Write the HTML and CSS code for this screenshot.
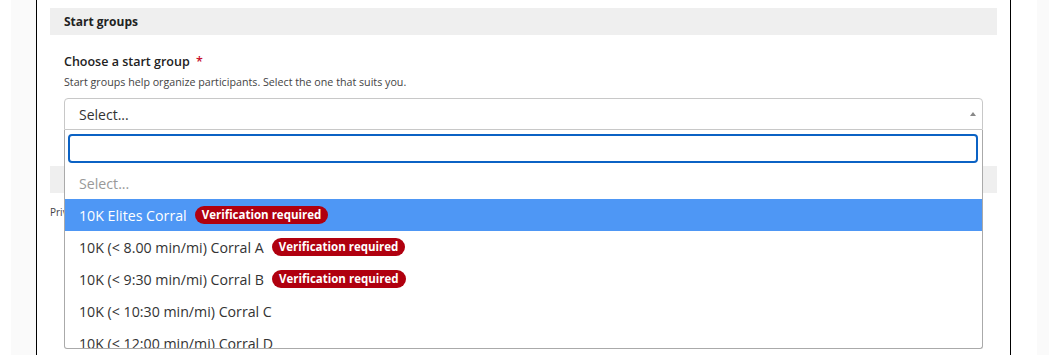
FILE: index.html
```html
<!DOCTYPE html>
<html lang="en">
<head>
<meta charset="utf-8">
<title>Start groups</title>
<link rel="stylesheet" href="styles.css">
</head>
<body>
<div class="page">
  <div class="edge"></div>
  <div class="shade"></div>
  <main class="panel">
    <div class="section-head">Start groups</div>
    <div class="field">
      <div class="label">Choose a start group <span class="req">*</span></div>
      <div class="help">Start groups help organize participants. Select the one that suits you.</div>
      <div class="select-wrap">
        <div class="select">
          <span class="select-text">Select...</span>
          <span class="arrow"></span>
        </div>
        <div class="dropdown">
          <div class="search-wrap"><input class="search" type="text" aria-label="Search"></div>
          <ul class="options">
            <li class="opt placeholder">Select...</li>
            <li class="opt active">10K Elites Corral <span class="badge">Verification required</span></li>
            <li class="opt">10K (&lt; 8.00 min/mi) Corral A <span class="badge">Verification required</span></li>
            <li class="opt">10K (&lt; 9:30 min/mi) Corral B <span class="badge">Verification required</span></li>
            <li class="opt">10K (&lt; 10:30 min/mi) Corral C</li>
            <li class="opt">10K (&lt; 12:00 min/mi) Corral D</li>
          </ul>
        </div>
      </div>
    </div>
    <div class="section-head next">Privacy</div>
    <div class="small-text">Privacy settings for your registration.</div>
  </main>
  <div class="gap"></div>
  <div class="shade-r"></div>
</div>
</body>
</html>
```

FILE: styles.css
```css
* { box-sizing: border-box; }
html, body { margin: 0; padding: 0; background: #fff; }
body {
  font-family: "Open Sans", "Noto Sans", "Liberation Sans", sans-serif;
  color: #222;
  height: 355px;
  overflow: hidden;
}
.page {
  display: flex;
  height: 355px;
}
.edge { width: 11px; background: #fff; }
.shade { width: 25px; background: #fafafa; }
.panel {
  width: 975px;
  border-left: 1px solid #000;
  border-right: 1px solid #000;
  padding: 8px 13px 0 13px;
  background: #fff;
}
.gap { width: 26px; background: #fff; }
.shade-r { flex: 1; background: #fafafa; }

.section-head {
  height: 27px;
  background: #efefef;
  padding: 0 14px;
  font-size: 12px;
  font-weight: 700;
  line-height: 27px;
  color: #222;
}
.field {
  padding: 0 14px;
}
.label {
  margin-top: 18px;
  font-size: 12.5px;
  font-weight: 600;
  line-height: 18px;
  color: #222;
}
.req { color: #c8102e; margin-left: 3px; }
.help {
  margin-top: 4px;
  font-size: 10.7px;
  line-height: 14px;
  color: #444;
}
.select-wrap {
  position: relative;
  margin-top: 9px;
}
.select {
  height: 32px;
  border: 1px solid #c8c8c8;
  border-radius: 4px 4px 0 0;
  display: flex;
  align-items: center;
  justify-content: space-between;
  padding: 0 6px 0 14px;
}
.select-text { font-size: 14px; color: #333; }
.arrow {
  width: 0; height: 0;
  border-left: 3px solid transparent;
  border-right: 3px solid transparent;
  border-bottom: 4px solid #888;
}
.dropdown {
  position: absolute;
  top: 100%;
  left: 0;
  right: 0;
  background: #fff;
  border: 1px solid #aaa;
  border-top: none;
  border-radius: 0 0 3px 3px;
  z-index: 5;
}
.search-wrap { padding: 4px 4px 4px 3px; }
.search {
  display: block;
  width: 100%;
  height: 29px;
  border: 2px solid #0b62c4;
  border-radius: 4px;
  outline: none;
  font: inherit;
}
.options {
  list-style: none;
  margin: 0;
  padding: 0;
  height: 181px;
  overflow: hidden;
}
.opt {
  height: 32px;
  display: flex;
  align-items: center;
  padding-left: 14px;
  font-size: 14.2px;
  color: #333;
  white-space: nowrap;
}
.opt.placeholder { color: #999; }
.opt.active { background: #4e97f5; color: #fff; }
.badge {
  display: inline-block;
  margin-left: 8px;
  height: 18px;
  line-height: 18px;
  padding: 0 7px;
  border-radius: 9px;
  background: #b0000f;
  color: #fff;
  font-size: 11.5px;
  font-weight: 700;
}
.section-head.next { margin-top: 36px; }
.small-text {
  margin-top: 12px;
  font-size: 10px;
  color: #444;
}
```
